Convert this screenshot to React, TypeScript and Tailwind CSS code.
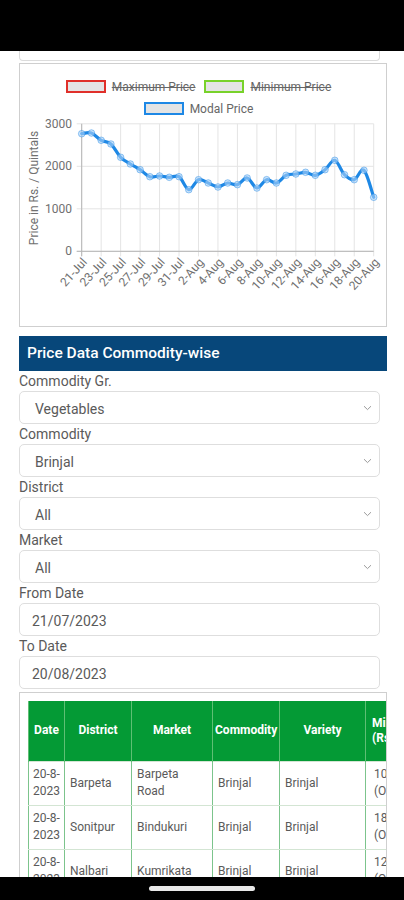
import React from "react";

const DATA = [2767, 2783, 2612, 2525, 2212, 2054, 1920, 1755, 1772, 1741, 1755, 1450, 1685, 1607, 1513, 1607, 1568, 1725, 1489, 1685, 1607, 1788, 1819, 1859, 1788, 1920, 2141, 1802, 1685, 1906, 1271];
const XLABELS = ["21-Jul", "23-Jul", "25-Jul", "27-Jul", "29-Jul", "31-Jul", "2-Aug", "4-Aug", "6-Aug", "8-Aug", "10-Aug", "12-Aug", "14-Aug", "16-Aug", "18-Aug", "20-Aug"];

const X0 = 61.7;
const X1 = 353.7;
const Y0 = 136.3;
const YS = 0.0425;
const px = (i: number) => X0 + ((X1 - X0) * i) / 30;
const py = (v: number) => Y0 - v * YS;

function linePath() {
  const pts = DATA.map((v, i) => [px(i), py(v)]);
  let d = `M${pts[0][0]},${pts[0][1]}`;
  for (let i = 0; i < pts.length - 1; i++) {
    const p0 = pts[i - 1] || pts[i];
    const p1 = pts[i];
    const p2 = pts[i + 1];
    const p3 = pts[i + 2] || p2;
    const c1x = p1[0] + (p2[0] - p0[0]) / 6;
    const c1y = p1[1] + (p2[1] - p0[1]) / 6;
    const c2x = p2[0] - (p3[0] - p1[0]) / 6;
    const c2y = p2[1] - (p3[1] - p1[1]) / 6;
    d += ` C${c1x},${c1y} ${c2x},${c2y} ${p2[0]},${p2[1]}`;
  }
  return d;
}

function Chart() {
  return (
    <svg width="366" height="211" className="block">
      {[0, 1000, 2000, 3000].map((v) => (
        <line key={v} x1={56.7} x2={X1} y1={py(v)} y2={py(v)} stroke="#e4e4e4" strokeWidth="1" />
      ))}
      {XLABELS.map((_, k) => (
        <line key={k} x1={px(2 * k)} x2={px(2 * k)} y1={py(3000)} y2={Y0 + 5} stroke="#e4e4e4" strokeWidth="1" />
      ))}
      <line x1={X0} x2={X0} y1={py(3000)} y2={Y0 + 5} stroke="#b5b5b5" strokeWidth="1" />
      <line x1={56.7} x2={X1} y1={Y0} y2={Y0} stroke="#b5b5b5" strokeWidth="1" />
      {[0, 1000, 2000, 3000].map((v) => (
        <text key={v} x={52} y={py(v)} textAnchor="end" dominantBaseline="central" fontSize="12" fill="#707070">
          {v}
        </text>
      ))}
      <text x={14} y={73} transform="rotate(-90 14 73)" textAnchor="middle" dominantBaseline="central" fontSize="12" fill="#707070">
        Price in Rs. / Quintals
      </text>
      {XLABELS.map((l, k) => {
        const x = px(2 * k) + 3;
        const y = 145;
        return (
          <text key={l} x={x} y={y} transform={`rotate(-48 ${x} ${y})`} textAnchor="end" dominantBaseline="central" fontSize="12" fill="#707070">
            {l}
          </text>
        );
      })}
      <path d={linePath()} fill="none" stroke="#1e88e5" strokeWidth="3.2" strokeLinejoin="round" strokeLinecap="round" />
      {DATA.map((v, i) => (
        <circle key={i} cx={px(i)} cy={py(v)} r="3.3" fill="rgba(170,210,248,0.6)" stroke="rgba(30,136,229,0.45)" strokeWidth="1" />
      ))}
    </svg>
  );
}

function LegendItem({ color, label, strike }: { color: string; label: string; strike?: boolean }) {
  return (
    <div className="flex items-center gap-[6px]">
      <div className="w-[40px] h-[13px] bg-[#e4e4e4] border-2" style={{ borderColor: color }} />
      <span className={`text-[12px] leading-none text-[#666] ${strike ? "line-through" : ""}`}>{label}</span>
    </div>
  );
}

function Chevron() {
  return (
    <svg width="9" height="6" viewBox="0 0 9 6">
      <path d="M1 1.2 L4.5 4.6 L8 1.2" fill="none" stroke="#9a9a9a" strokeWidth="1" />
    </svg>
  );
}

function Field({ label, value, select }: { label: string; value: string; select?: boolean }) {
  return (
    <>
      <div className="h-[20px] leading-[21px] text-[14px] text-[#5a5a5a]">{label}</div>
      <div className={`w-[361px] h-[33px] border border-[#dedede] rounded-[5px] flex items-center justify-between pr-[7px] ${select ? "pl-[15px]" : "pl-[12px]"}`}>
        <span className="text-[14px] leading-[14px] pt-[2px] text-[#5a5a5a]">{value}</span>
        {select && <Chevron />}
      </div>
    </>
  );
}

const ROWS = [
  { date: ["20-8-", "2023"], district: "Barpeta", market: ["Barpeta", "Road"], commodity: "Brinjal", variety: "Brinjal", min: ["1000", "(Other)"] },
  { date: ["20-8-", "2023"], district: "Sonitpur", market: ["Bindukuri"], commodity: "Brinjal", variety: "Brinjal", min: ["1800", "(Other)"] },
  { date: ["20-8-", "2023"], district: "Nalbari", market: ["Kumrikata"], commodity: "Brinjal", variety: "Brinjal", min: ["1200", "(Other)"] },
];

function Lines({ items }: { items: string[] }) {
  return (
    <>
      {items.map((t, i) => (
        <React.Fragment key={i}>
          {i > 0 && <br />}
          <span className="whitespace-nowrap">{t}</span>
        </React.Fragment>
      ))}
    </>
  );
}

export default function App() {
  const th = "bg-[#049a35] text-white font-bold text-[12px] leading-[15px] text-center px-[2px] border-x border-x-[#5fbf74] h-[60px] align-middle";
  const td = "border-x border-x-[#7cc48c] border-y border-y-[#d3e5d3] px-[5px] py-[4px] text-[12px] leading-[17px] text-[#5a5a5a] align-middle h-[44px] overflow-hidden";
  return (
    <div className="h-[900px] w-[404px] overflow-hidden flex flex-col bg-white font-[Roboto,sans-serif]">
      <div className="h-[51px] bg-black shrink-0" />
      <div className="flex-1 overflow-hidden pl-[19px]">
        <div className="w-[361px] h-[10px] border-x border-b border-[#dcdcdc] rounded-b-[4px]" />
        <div className="mt-[2px] w-[368px] h-[264px] border border-[#cfcfcf] flex flex-col">
          <div className="pt-[16px] pr-[9px] flex flex-col items-center gap-[9px]">
            <div className="h-[13px] flex items-center gap-[9px]">
              <LegendItem color="#e0302a" label="Maximum Price" strike />
              <LegendItem color="#78d22a" label="Minimum Price" strike />
            </div>
            <div className="h-[13px] flex items-center">
              <LegendItem color="#1e88e5" label="Modal Price" />
            </div>
          </div>
          <Chart />
        </div>
        <div className="mt-[9px] w-[368px] h-[35px] bg-[#07477a] text-white text-[15.5px] font-medium pl-[8px] flex items-center">
          Price Data Commodity-wise
        </div>
        <Field label="Commodity Gr." value="Vegetables" select />
        <Field label="Commodity" value="Brinjal" select />
        <Field label="District" value="All" select />
        <Field label="Market" value="All" select />
        <Field label="From Date" value="21/07/2023" />
        <Field label="To Date" value="20/08/2023" />
        <div className="mt-[3px] w-[368px] border border-[#cfcfcf] p-2 overflow-hidden">
          <table className="border-collapse table-fixed w-[600px]">
            <colgroup>
              <col className="w-[36px]" />
              <col className="w-[67px]" />
              <col className="w-[81px]" />
              <col className="w-[67px]" />
              <col className="w-[86px]" />
              <col className="w-[88px]" />
              <col className="w-[88px]" />
              <col className="w-[87px]" />
            </colgroup>
            <thead>
              <tr>
                <th className={th}>Date</th>
                <th className={th}>District</th>
                <th className={th}>Market</th>
                <th className={th}>Commodity</th>
                <th className={th}>Variety</th>
                <th className={`${th} text-left pl-[6px]`}>Min Price<br />(Rs./Quintal)</th>
                <th className={th}>Max Price<br />(Rs./Quintal)</th>
                <th className={th}>Modal Price<br />(Rs./Quintal)</th>
              </tr>
            </thead>
            <tbody>
              {ROWS.map((r, i) => (
                <tr key={i}>
                  <td className={`${td} pl-[4px] pr-[1px]`}><Lines items={r.date} /></td>
                  <td className={td}>{r.district}</td>
                  <td className={td}><Lines items={r.market} /></td>
                  <td className={td}>{r.commodity}</td>
                  <td className={td}>{r.variety}</td>
                  <td className={`${td} pl-[8px]`}><Lines items={r.min} /></td>
                  <td className={td}><Lines items={["2000", "(Other)"]} /></td>
                  <td className={td}><Lines items={["1500", "(Other)"]} /></td>
                </tr>
              ))}
            </tbody>
          </table>
        </div>
      </div>
      <div className="h-[23px] bg-black shrink-0 flex justify-center pt-[9px]">
        <div className="w-[106px] h-[5px] rounded-full bg-[#e8e8e8]" />
      </div>
    </div>
  );
}
